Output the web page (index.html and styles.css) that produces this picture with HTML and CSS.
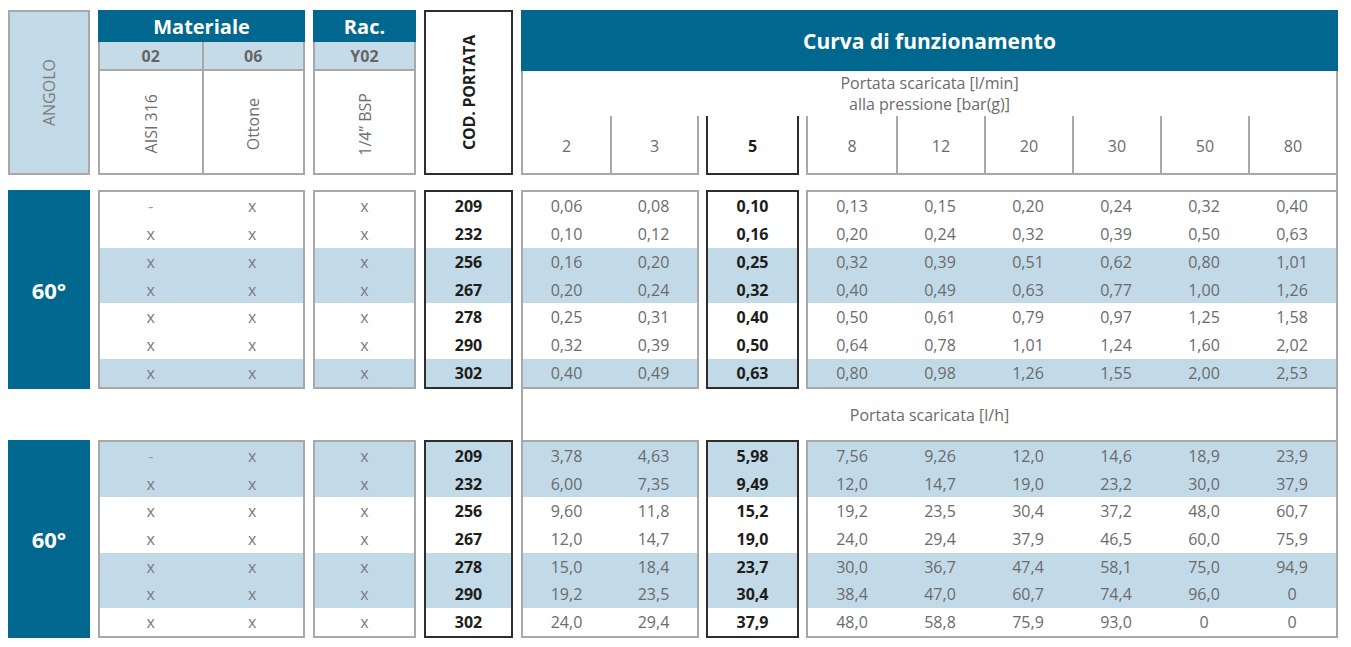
FILE: index.html
```html
<!DOCTYPE html>
<html lang="it">
<head>
<meta charset="utf-8">
<title>Curva di funzionamento</title>
<link rel="stylesheet" href="styles.css">
</head>
<body>
<div class="sheet">
  <!-- header -->
  <div class="hdr ang-h"><span class="vt light">ANGOLO</span></div>
  <div class="hdr grp-h">
    <div class="band">Materiale</div>
    <div class="subs"><div>02</div><div>06</div></div>
    <div class="vcells"><div><span class="vt">AISI 316</span></div><div><span class="vt">Ottone</span></div></div>
  </div>
  <div class="hdr grp-h">
    <div class="band">Rac.</div>
    <div class="subs"><div>Y02</div></div>
    <div class="vcells"><div><span class="vt">1/4” BSP</span></div></div>
  </div>
  <div class="hdr cod-h"><span class="vt strong">COD. PORTATA</span></div>
  <div class="hdr cur-h">
    <div class="band big">Curva di funzionamento</div>
    <div class="press">Portata scaricata [l/min]<br>alla pressione [bar(g)]</div>
    <div class="cols">
      <div class="cbox"><div>2</div><div>3</div></div>
      <div class="cbox dark"><div class="strong">5</div></div>
      <div class="cbox"><div>8</div><div>12</div><div>20</div><div>30</div><div>50</div><div>80</div></div>
    </div>
  </div>
  <div class="connector"></div>

  <!-- body 1 : l/min -->
  <div class="b1 ang-b">60°</div>
  <div class="b1 tbox xs">
    <div class="row"><span class="dash">-</span><span>x</span></div>
    <div class="row"><span>x</span><span>x</span></div>
    <div class="row hl"><span>x</span><span>x</span></div>
    <div class="row hl"><span>x</span><span>x</span></div>
    <div class="row"><span>x</span><span>x</span></div>
    <div class="row"><span>x</span><span>x</span></div>
    <div class="row hl"><span>x</span><span>x</span></div>
  </div>
  <div class="b1 tbox xs">
    <div class="row"><span>x</span></div>
    <div class="row"><span>x</span></div>
    <div class="row hl"><span>x</span></div>
    <div class="row hl"><span>x</span></div>
    <div class="row"><span>x</span></div>
    <div class="row"><span>x</span></div>
    <div class="row hl"><span>x</span></div>
  </div>
  <div class="b1 tbox dark strong">
    <div class="row"><span>209</span></div>
    <div class="row"><span>232</span></div>
    <div class="row hl"><span>256</span></div>
    <div class="row hl"><span>267</span></div>
    <div class="row"><span>278</span></div>
    <div class="row"><span>290</span></div>
    <div class="row hl"><span>302</span></div>
  </div>
  <div class="b1 cur-b">
    <div class="tbox">
      <div class="row"><span>0,06</span><span>0,08</span></div>
      <div class="row"><span>0,10</span><span>0,12</span></div>
      <div class="row hl"><span>0,16</span><span>0,20</span></div>
      <div class="row hl"><span>0,20</span><span>0,24</span></div>
      <div class="row"><span>0,25</span><span>0,31</span></div>
      <div class="row"><span>0,32</span><span>0,39</span></div>
      <div class="row hl"><span>0,40</span><span>0,49</span></div>
    </div>
    <div class="tbox dark strong">
      <div class="row"><span>0,10</span></div>
      <div class="row"><span>0,16</span></div>
      <div class="row hl"><span>0,25</span></div>
      <div class="row hl"><span>0,32</span></div>
      <div class="row"><span>0,40</span></div>
      <div class="row"><span>0,50</span></div>
      <div class="row hl"><span>0,63</span></div>
    </div>
    <div class="tbox">
      <div class="row"><span>0,13</span><span>0,15</span><span>0,20</span><span>0,24</span><span>0,32</span><span>0,40</span></div>
      <div class="row"><span>0,20</span><span>0,24</span><span>0,32</span><span>0,39</span><span>0,50</span><span>0,63</span></div>
      <div class="row hl"><span>0,32</span><span>0,39</span><span>0,51</span><span>0,62</span><span>0,80</span><span>1,01</span></div>
      <div class="row hl"><span>0,40</span><span>0,49</span><span>0,63</span><span>0,77</span><span>1,00</span><span>1,26</span></div>
      <div class="row"><span>0,50</span><span>0,61</span><span>0,79</span><span>0,97</span><span>1,25</span><span>1,58</span></div>
      <div class="row"><span>0,64</span><span>0,78</span><span>1,01</span><span>1,24</span><span>1,60</span><span>2,02</span></div>
      <div class="row hl"><span>0,80</span><span>0,98</span><span>1,26</span><span>1,55</span><span>2,00</span><span>2,53</span></div>
    </div>
  </div>

  <div class="mid">Portata scaricata [l/h]</div>

  <!-- body 2 : l/h -->
  <div class="b2 ang-b">60°</div>
  <div class="b2 tbox xs">
    <div class="row hl"><span class="dash">-</span><span>x</span></div>
    <div class="row hl"><span>x</span><span>x</span></div>
    <div class="row"><span>x</span><span>x</span></div>
    <div class="row"><span>x</span><span>x</span></div>
    <div class="row hl"><span>x</span><span>x</span></div>
    <div class="row hl"><span>x</span><span>x</span></div>
    <div class="row"><span>x</span><span>x</span></div>
  </div>
  <div class="b2 tbox xs">
    <div class="row hl"><span>x</span></div>
    <div class="row hl"><span>x</span></div>
    <div class="row"><span>x</span></div>
    <div class="row"><span>x</span></div>
    <div class="row hl"><span>x</span></div>
    <div class="row hl"><span>x</span></div>
    <div class="row"><span>x</span></div>
  </div>
  <div class="b2 tbox dark strong">
    <div class="row hl"><span>209</span></div>
    <div class="row hl"><span>232</span></div>
    <div class="row"><span>256</span></div>
    <div class="row"><span>267</span></div>
    <div class="row hl"><span>278</span></div>
    <div class="row hl"><span>290</span></div>
    <div class="row"><span>302</span></div>
  </div>
  <div class="b2 cur-b">
    <div class="tbox">
      <div class="row hl"><span>3,78</span><span>4,63</span></div>
      <div class="row hl"><span>6,00</span><span>7,35</span></div>
      <div class="row"><span>9,60</span><span>11,8</span></div>
      <div class="row"><span>12,0</span><span>14,7</span></div>
      <div class="row hl"><span>15,0</span><span>18,4</span></div>
      <div class="row hl"><span>19,2</span><span>23,5</span></div>
      <div class="row"><span>24,0</span><span>29,4</span></div>
    </div>
    <div class="tbox dark strong">
      <div class="row hl"><span>5,98</span></div>
      <div class="row hl"><span>9,49</span></div>
      <div class="row"><span>15,2</span></div>
      <div class="row"><span>19,0</span></div>
      <div class="row hl"><span>23,7</span></div>
      <div class="row hl"><span>30,4</span></div>
      <div class="row"><span>37,9</span></div>
    </div>
    <div class="tbox">
      <div class="row hl"><span>7,56</span><span>9,26</span><span>12,0</span><span>14,6</span><span>18,9</span><span>23,9</span></div>
      <div class="row hl"><span>12,0</span><span>14,7</span><span>19,0</span><span>23,2</span><span>30,0</span><span>37,9</span></div>
      <div class="row"><span>19,2</span><span>23,5</span><span>30,4</span><span>37,2</span><span>48,0</span><span>60,7</span></div>
      <div class="row"><span>24,0</span><span>29,4</span><span>37,9</span><span>46,5</span><span>60,0</span><span>75,9</span></div>
      <div class="row hl"><span>30,0</span><span>36,7</span><span>47,4</span><span>58,1</span><span>75,0</span><span>94,9</span></div>
      <div class="row hl"><span>38,4</span><span>47,0</span><span>60,7</span><span>74,4</span><span>96,0</span><span>0</span></div>
      <div class="row"><span>48,0</span><span>58,8</span><span>75,9</span><span>93,0</span><span>0</span><span>0</span></div>
    </div>
  </div>
</div>
</body>
</html>
```
FILE: styles.css
```css
* { box-sizing: border-box; }

body {
  margin: 10px 0 0 8px;
  background: #ffffff;
  font-family: "Open Sans", "Liberation Sans", sans-serif;
  font-size: 16px;
  color: #6b6b6b;
}

.sheet {
  display: grid;
  grid-template-columns: 82px 207px 103px 89px 817px;
  grid-template-rows: 165px 15px 199px 51px 198px;
  column-gap: 8px;
}

.hdr { grid-row: 1; }
.b1 { grid-row: 3; }
.b2 { grid-row: 5; }

/* vertical labels */
.vt {
  writing-mode: vertical-rl;
  transform: rotate(180deg);
  white-space: nowrap;
  font-size: 16px;
  line-height: 1;
  color: #6f6f6f;
}
.vt.light { color: #7d7d7d; }
.vt.strong { font-weight: 700; color: #1d1d1b; font-size: 16px; letter-spacing: -0.2px; }

/* header: angolo */
.ang-h {
  background: #c2d9e7;
  border: 2px solid #a8a8a8;
  display: flex;
  align-items: center;
  justify-content: center;
}

/* header groups */
.grp-h { display: flex; flex-direction: column; }

.band {
  background: #00678f;
  color: #ffffff;
  font-weight: 700;
  font-size: 20px;
  height: 32px;
  display: flex;
  align-items: center;
  justify-content: center;
}
.band.big { height: 61px; padding-top: 1px; font-size: 21px; }

.subs {
  height: 29px;
  display: grid;
  grid-auto-flow: column;
  grid-auto-columns: 1fr;
  background: #c6dbe8;
  border: 2px solid #a8a8a8;
  border-top: 0;
}
.subs > div {
  display: flex;
  align-items: center;
  justify-content: center;
  font-weight: 700;
  color: #666666;
}
.subs > div + div { border-left: 2px solid #a8a8a8; }

.vcells {
  flex: 1;
  display: grid;
  grid-auto-flow: column;
  grid-auto-columns: 1fr;
  border: 2px solid #a8a8a8;
  border-top: 0;
}
.vcells > div { display: flex; align-items: center; justify-content: center; padding-top: 4px; }
.vcells > div + div { border-left: 2px solid #a8a8a8; }

/* header: cod */
.cod-h {
  border: 2px solid #2e2e2e;
  display: flex;
  align-items: center;
  justify-content: center;
}

/* header: curva */
.cur-h { display: flex; flex-direction: column; }

.press {
  height: 45px;
  padding-top: 2px;
  border-left: 2px solid #a8a8a8;
  border-right: 2px solid #a8a8a8;
  text-align: center;
  line-height: 21px;
}

.cols {
  flex: 1;
  display: grid;
  grid-template-columns: 178px 93px 532px;
  column-gap: 7px;
}

.cbox {
  display: grid;
  grid-auto-flow: column;
  grid-auto-columns: 1fr;
  border: 2px solid #a8a8a8;
  border-top: 0;
}
.cbox.dark { border-color: #2e2e2e; }
.cbox > div {
  display: flex;
  align-items: center;
  justify-content: center;
  padding-top: 3px;
}
.cbox > div + div { border-left: 2px solid #a8a8a8; }

.strong { font-weight: 700; color: #1d1d1b; }

.connector {
  grid-row: 2;
  grid-column: 5;
  border-right: 2px solid #a8a8a8;
}

/* body */
.ang-b {
  background: #00678f;
  color: #ffffff;
  font-weight: 700;
  font-size: 22px;
  display: flex;
  align-items: center;
  justify-content: center;
}

.tbox {
  display: flex;
  flex-direction: column;
  border: 2px solid #a8a8a8;
}
.tbox.dark { border-color: #2e2e2e; }
.tbox.strong .row { color: #1d1d1b; }
.tbox.xs .row { color: #7a7a7a; }
.dash { color: #9a9a9a; }

.row {
  flex: 1;
  display: grid;
  grid-auto-flow: column;
  grid-auto-columns: 1fr;
  align-items: center;
  text-align: center;
  line-height: 1;
}
.row.hl { background: #c2d9e7; }

.cur-b {
  grid-column: 5;
  display: grid;
  grid-template-columns: 178px 93px 532px;
  column-gap: 7px;
}

.mid {
  grid-row: 4;
  grid-column: 5;
  border-left: 2px solid #a8a8a8;
  border-right: 2px solid #a8a8a8;
  display: flex;
  align-items: center;
  justify-content: center;
}
```
